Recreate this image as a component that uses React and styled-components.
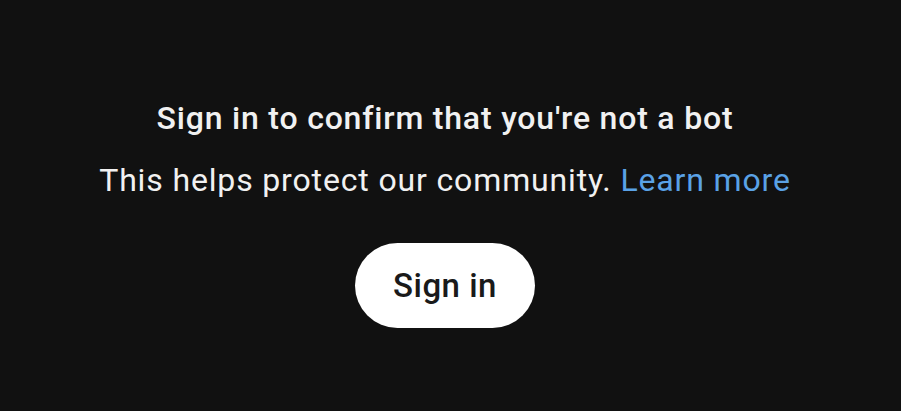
import React from "react";
import styled, { createGlobalStyle } from "styled-components";

const Global = createGlobalStyle`
  html, body { margin: 0; padding: 0; background: #111111; }
  body { font-family: Roboto, "Noto Sans", Arial, sans-serif; }
`;

const Page = styled.div`
  width: 901px;
  height: 411px;
  background: #111111;
  display: flex;
  flex-direction: column;
  align-items: center;
  padding: 98px 11px 0 0;
  box-sizing: border-box;
`;

const Title = styled.div`
  color: #f1f1f1;
  font-size: 32px;
  font-weight: 500;
  line-height: 40px;
  letter-spacing: 0.8px;
  white-space: nowrap;
`;

const Sub = styled.div`
  margin-top: 22px;
  color: #f1f1f1;
  font-size: 32px;
  font-weight: 400;
  line-height: 40px;
  letter-spacing: 0.85px;
  white-space: nowrap;
`;

const Link = styled.a`
  color: #5aa2e6;
  text-decoration: none;
`;

const Button = styled.button`
  margin-top: 43px;
  width: 180px;
  height: 85px;
  border: none;
  border-radius: 43px;
  background: #ffffff;
  color: #1a1a1a;
  font-family: Roboto, "Noto Sans", Arial, sans-serif;
  font-size: 33px;
  font-weight: 500;
  letter-spacing: 0.5px;
  padding: 0;
  cursor: pointer;
`;

export default function App() {
  return (
    <>
      <Global />
      <Page>
        <Title>Sign in to confirm that you're not a bot</Title>
        <Sub>
          This helps protect our community. <Link href="#">Learn more</Link>
        </Sub>
        <Button>Sign in</Button>
      </Page>
    </>
  );
}
